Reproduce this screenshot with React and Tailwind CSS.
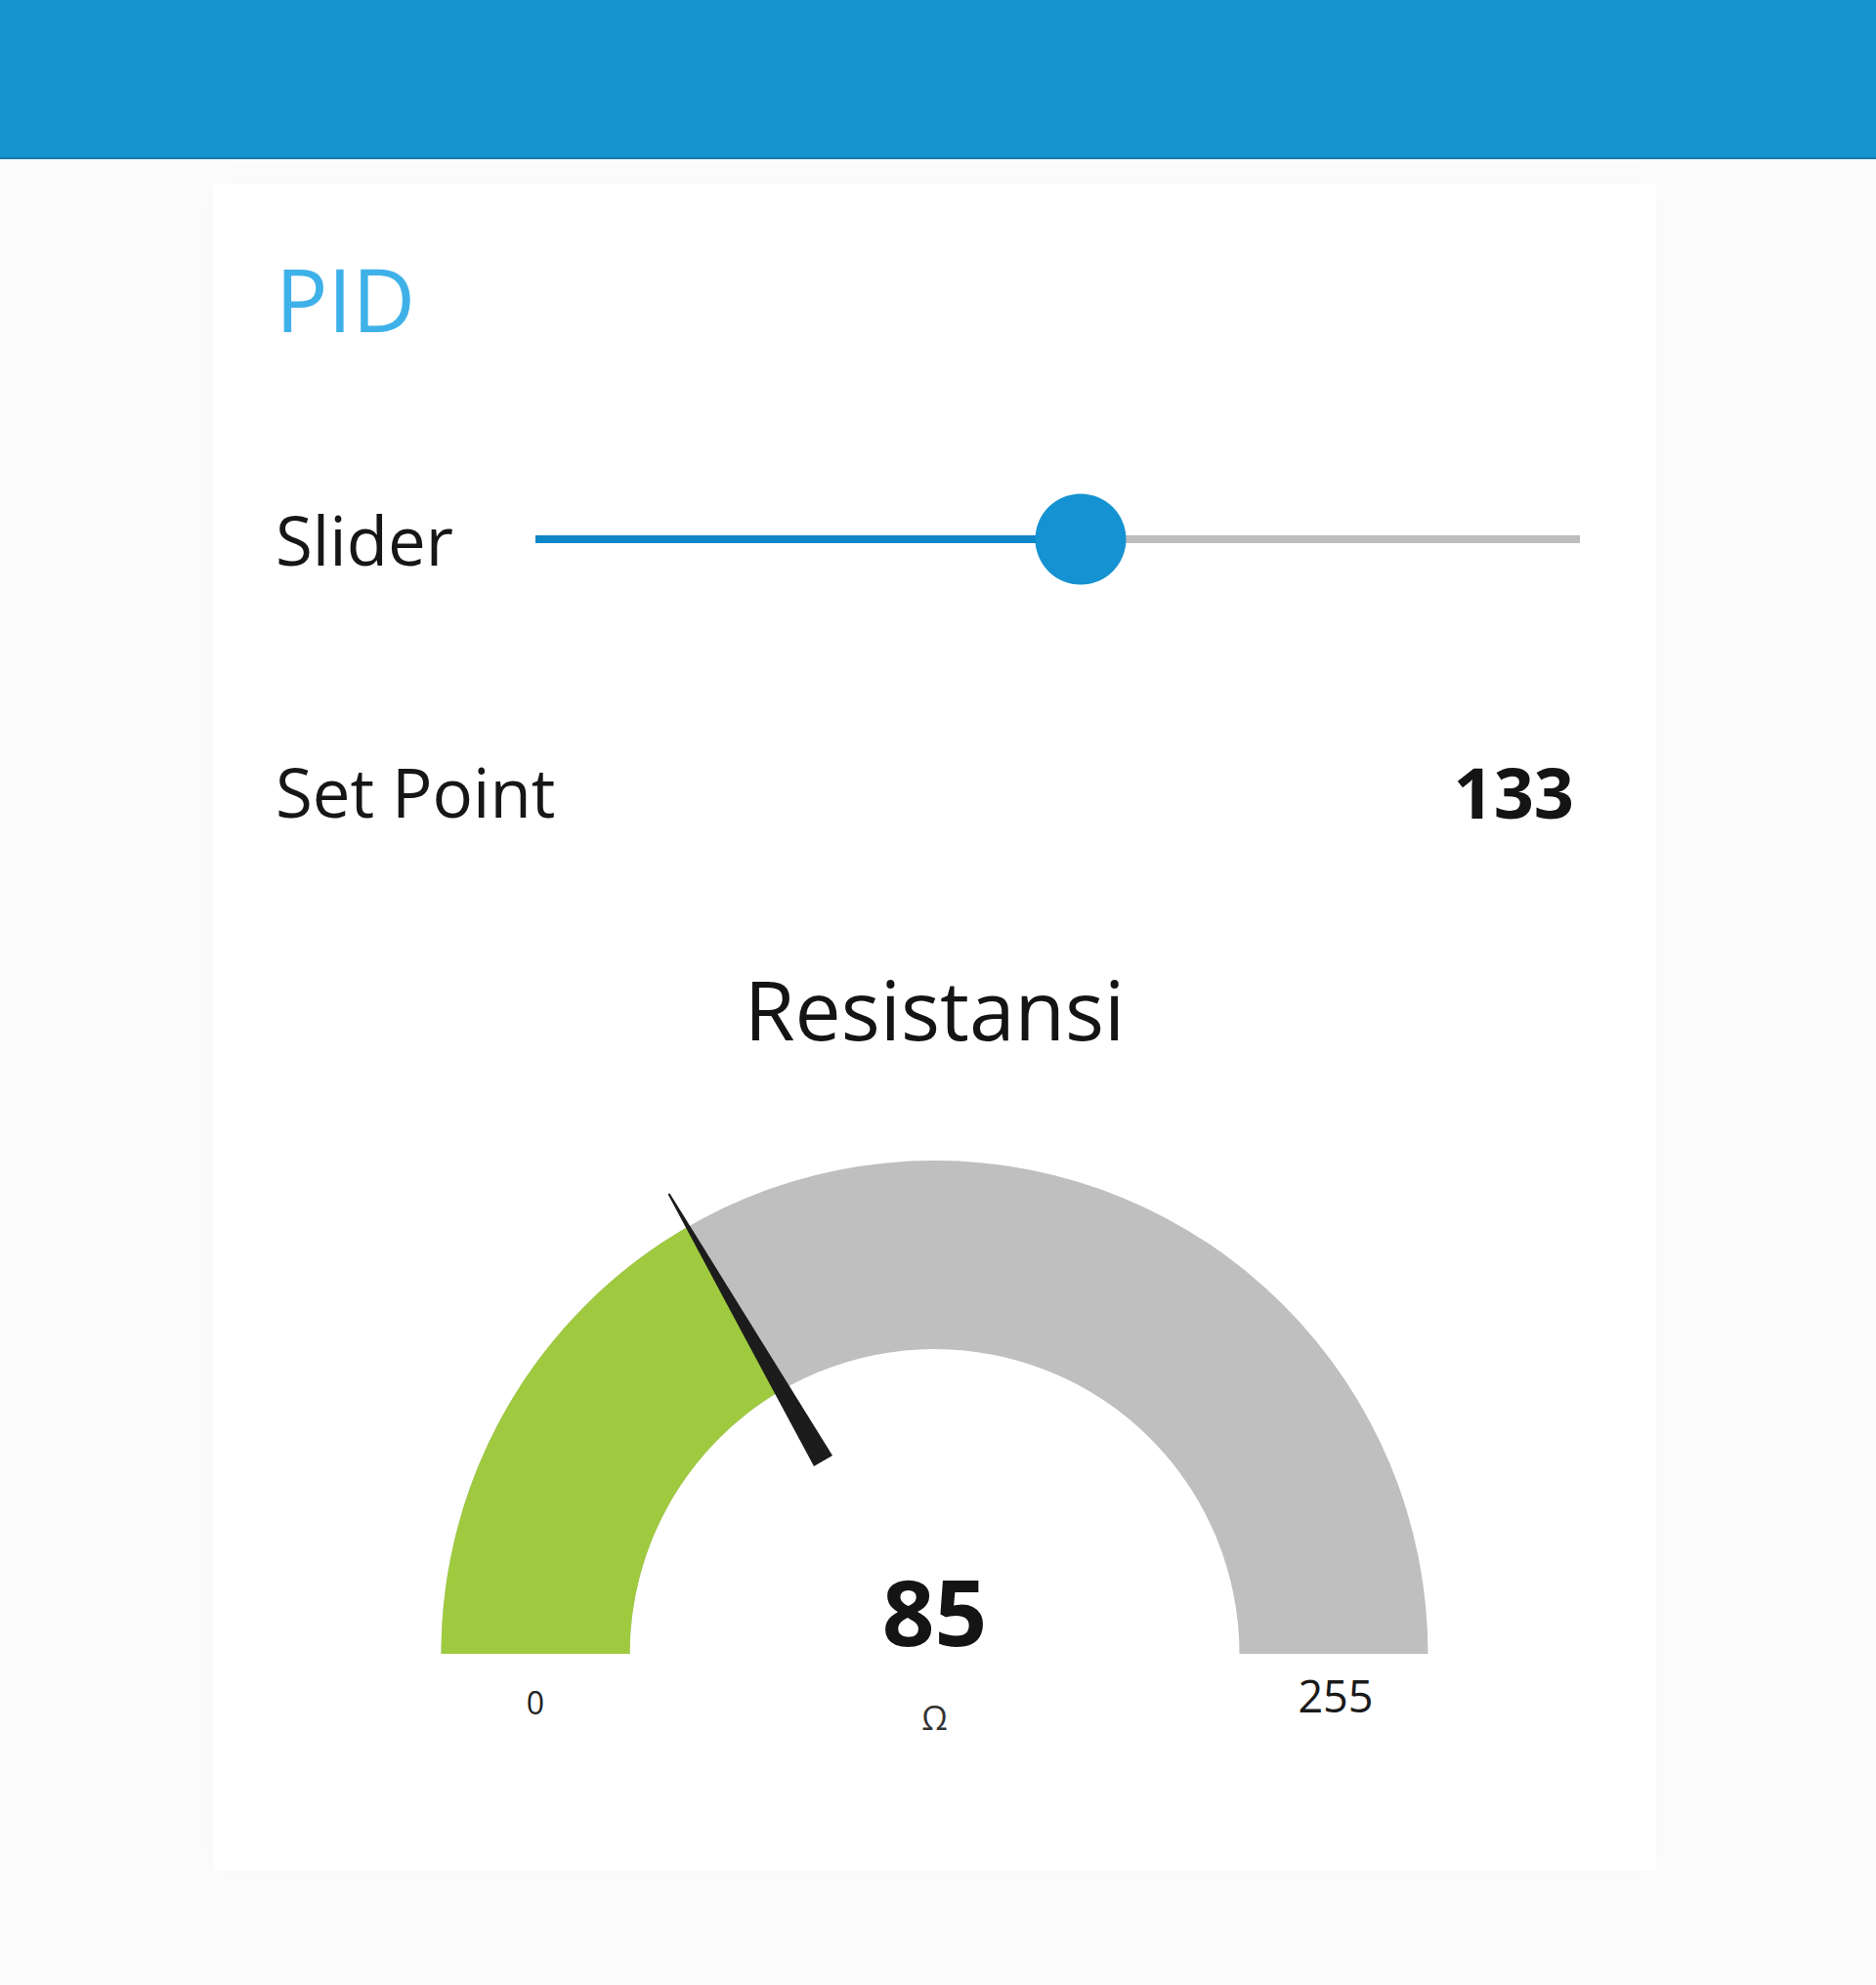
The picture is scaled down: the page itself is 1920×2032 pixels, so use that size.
const font = { fontFamily: '"Open Sans", "Noto Sans", sans-serif' };

const value = 133;
const pct = (value / 255) * 100;

// gauge geometry (svg coords)
const cx = 738.5;
const cy = 565;
const R = 505;
const r = 312;

const Gauge = () => (
  <svg width="1477" height="700" viewBox="0 0 1477 700" className="block">
    <path
      d={`M ${cx - R} ${cy} A ${R} ${R} 0 0 1 ${cx + R} ${cy} L ${cx + r} ${cy} A ${r} ${r} 0 0 0 ${cx - r} ${cy} Z`}
      fill="#bfbfbf"
    />
    <path
      d={`M ${cx - R} ${cy} A ${R} ${R} 0 0 1 ${cx - R * 0.5} ${cy - R * 0.866} L ${cx - r * 0.5} ${cy - r * 0.866} A ${r} ${r} 0 0 0 ${cx - r} ${cy} Z`}
      fill="#9fca3f"
    />
    {/* needle */}
    <polygon points="634.0,362.1 615.0,373.1 465.6,94.4 467.4,93.4" fill="#1c1c1c" />
    <text x={cx} y="521" textAnchor="middle" dominantBaseline="central" fontSize="94" fontWeight="700" fill="#141414" style={font}>
      85
    </text>
    <text x="330" y="614" textAnchor="middle" dominantBaseline="central" fontSize="32" fill="#222" style={font}>
      0
    </text>
    <text x={cx} y="630" textAnchor="middle" dominantBaseline="central" fontSize="34" fill="#333" style={font}>
      Ω
    </text>
    <text x="1149" y="607" textAnchor="middle" dominantBaseline="central" fontSize="45" fill="#1a1a1a" style={font}>
      255
    </text>
  </svg>
);

export default function App() {
  return (
    <div className="min-h-[2032px] w-[1920px] bg-[#fcfcfc]" style={font}>
      {/* toolbar */}
      <div className="h-[163px] bg-[#1593cf] border-b-2 border-[#1279ad]" />

      <div className="ml-[218px] mt-[25px] w-[1477px] h-[1727px] bg-white shadow-[0_0_40px_rgba(0,0,0,0.025)] flex flex-col">
        <div className="h-[234px] flex items-center pl-[64px]">
          <h1 className="text-[89px] leading-none font-normal text-[#3fb1e9]">PID</h1>
        </div>

        {/* slider row */}
        <div className="h-[260px] flex items-center pl-[64px] pr-[78px]">
          <span className="w-[266px] shrink-0 text-[69px] leading-none text-[#161616]">Slider</span>
          <div className="relative flex-1 h-[8px] bg-[#bdbdbd]">
            <div className="h-full bg-[#0e86c8]" style={{ width: `${pct}%` }} />
            <div
              className="absolute top-1/2 w-[93px] h-[93px] -translate-x-1/2 -translate-y-1/2 rounded-full bg-[#1592d1]"
              style={{ left: `${pct}%` }}
            />
          </div>
        </div>

        {/* set point row */}
        <div className="h-[256px] flex items-center justify-between pl-[64px] pr-[84px]">
          <span className="text-[69px] leading-none text-[#161616]">Set Point</span>
          <span className="text-[72px] leading-none font-bold text-[#141414]">{value}</span>
        </div>

        <div className="h-[190px] flex items-center justify-center">
          <span className="text-[84px] leading-none font-medium text-[#141414]">Resistansi</span>
        </div>

        <Gauge />
      </div>
    </div>
  );
}
